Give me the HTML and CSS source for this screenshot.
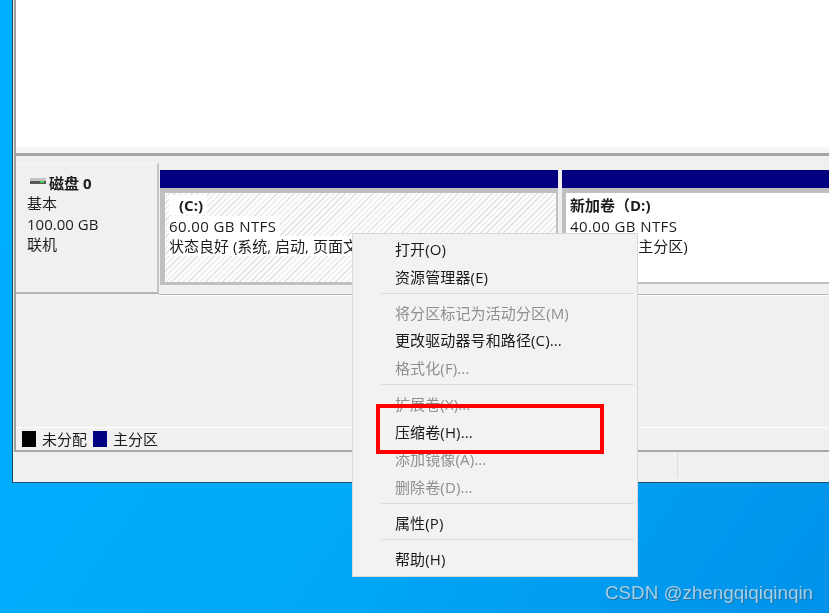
FILE: index.html
```html
<!DOCTYPE html>
<html lang="zh-CN">
<head>
<meta charset="utf-8">
<title>磁盘管理</title>
<link rel="stylesheet" href="styles.css">
</head>
<body>
<div class="desktop">
  <div class="window">
    <div class="frame">
      <div class="volume-list"></div>
      <div class="graph">
        <div class="disk-row">
          <div class="disk-card">
            <div class="disk-title">
              <svg class="disk-icon" width="16" height="7" viewBox="0 0 16 7"><rect x="0" y="0" width="16" height="3" fill="#c4c4c4"/><rect x="0" y="3" width="16" height="3" fill="#555"/><rect x="10" y="3" width="4" height="2" fill="#3fcf4a"/></svg>
              <b>磁盘 0</b>
            </div>
            <div class="line">基本</div>
            <div class="line">100.00 GB</div>
            <div class="line">联机</div>
          </div>
          <div class="partition part-c">
            <div class="part-head"></div>
            <div class="part-body hatch">
              <div class="line"><span class="label bold indent">(C:)</span></div>
              <div class="line"><span class="label wide">60.00 GB NTFS</span></div>
              <div class="line"><span class="label">状态良好 (系统, 启动, 页面文件, 故障转储, 主分区)</span></div>
            </div>
          </div>
          <div class="partition part-d">
            <div class="part-head"></div>
            <div class="part-body">
              <div class="line"><span class="label bold">新加卷（D:)</span></div>
              <div class="line"><span class="label wide">40.00 GB NTFS</span></div>
              <div class="line"><span class="label">状态良好 (主分区)</span></div>
            </div>
          </div>
        </div>
        <div class="rule"></div>
      </div>
      <div class="legend">
        <span class="swatch swatch-black"></span><span class="legend-text">未分配</span>
        <span class="swatch swatch-navy"></span><span class="legend-text">主分区</span>
      </div>
    </div>
    <div class="status">
      <span class="status-cell"></span>
    </div>
  </div>

  <div class="menu">
    <div class="item">打开(O)</div>
    <div class="item">资源管理器(E)</div>
    <div class="sep"></div>
    <div class="item off">将分区标记为活动分区(M)</div>
    <div class="item">更改驱动器号和路径(C)...</div>
    <div class="item off">格式化(F)...</div>
    <div class="sep"></div>
    <div class="item off">扩展卷(X)...</div>
    <div class="item">压缩卷(H)...</div>
    <div class="item off">添加镜像(A)...</div>
    <div class="item off">删除卷(D)...</div>
    <div class="sep"></div>
    <div class="item">属性(P)</div>
    <div class="sep"></div>
    <div class="item">帮助(H)</div>
  </div>
  <div class="highlight"></div>
  <div class="watermark">CSDN @zhengqiqiqinqin</div>
</div>
</body>
</html>
```
FILE: styles.css
```css
* { box-sizing: border-box; }
html, body { margin: 0; padding: 0; }
body {
  font-family: "Open Sans", "Noto Sans CJK SC", sans-serif;
  font-size: 15px;
  color: #1c1c1c;
}
.desktop {
  position: relative;
  width: 829px;
  height: 613px;
  overflow: hidden;
  background: linear-gradient(125deg, #00b0ff 0%, #00a9f8 55%, #0092ea 100%);
  filter: blur(0.3px);
}
.window {
  position: absolute;
  left: 12px;
  top: 0;
  width: 817px;
  height: 483px;
  display: flex;
  flex-direction: column;
  background: #f0f0f0;
  border-left: 1px solid #20485e;
  border-bottom: 1px solid #1c5474;
}
.frame {
  height: 452px;
  margin-left: 1px;
  display: flex;
  flex-direction: column;
  border-left: 2px solid #a0a0a0;
  border-bottom: 2px solid #a8a8a8;
}
.volume-list {
  height: 156px;
  background: linear-gradient(#fff 0 147px, #f6f6f6 147px 153px, #a4a4a4 153px);
}
.graph {
  height: 271px;
  padding-top: 7px;
  display: flex;
  flex-direction: column;
}
.disk-row {
  display: flex;
  height: 131px;
}
.disk-card {
  width: 143px;
  height: 131px;
  padding: 8px 0 0 11px;
  background: #f0f0f0;
  border-right: 2px solid #c4c4c4;
  border-bottom: 2px solid #b4b4b4;
  border-top: 1px solid #f8f8f8;
  flex: none;
}
.disk-title {
  display: flex;
  align-items: center;
  height: 21px;
  margin-left: 3px;
}
.disk-icon { margin-top: -3px; margin-right: 3px; flex: none; }
.line {
  height: 20.5px;
  line-height: 20px;
  white-space: nowrap;
}
.partition {
  display: flex;
  flex-direction: column;
  height: 122px;
  margin-top: 7px;
}
.part-c { width: 398px; margin-left: 1px; flex: none; }
.part-d { flex: 1; margin-left: 4px; margin-right: -2px; }
.part-head {
  height: 18px;
  background: #000080;
  flex: none;
}
.part-body {
  height: 95px;
  margin-top: 0;
  padding: 2px 0 0 4px;
  border: solid #c0c0c0;
  border-width: 5px 2px 3px 5px;
  background: #fff;
  overflow: hidden;
}
.part-c .part-body { height: 97px; border-width: 5px 2px 3px 5px; }
.part-d .part-body { border-width: 5px 0 2px 4px; height: 96px; }
.hatch {
  background: repeating-linear-gradient(135deg, #fcfcfc 0 3px, #e2e2e2 3px 4px);
}
.label {
  display: inline-block;
  height: 20px;
  padding-right: 4px;
  background: #fff;
}
.bold { font-weight: 700; }
.indent { padding-left: 10px; }
.wide { letter-spacing: 0.4px; }
.rule {
  height: 2px;
  margin-top: 0;
  background: #b8b8b8;
  border-bottom: 1px solid #fff;
  margin-left: 143px;
}
.legend {
  height: 23px;
  display: flex;
  align-items: center;
  padding-left: 6px;
  border-top: 1px solid #fff;
  background: #f0f0f0;
}
.swatch {
  width: 14px;
  height: 16px;
  flex: none;
}
.swatch-black { background: #000; }
.swatch-navy { background: #000080; margin-left: 6px; }
.legend-text { margin-left: 6px; line-height: 20px; }
.status {
  flex: 1;
  margin-left: 0;
  background: #f0f0f0;
  padding-left: 664px;
  padding-top: 1px;
}
.status-cell {
  display: block;
  width: 1px;
  height: 25px;
  background: #dcdcdc;
}
.menu {
  position: absolute;
  left: 352px;
  top: 233px;
  width: 286px;
  height: 344px;
  padding: 2px 3px 3px 0;
  background: #f2f2f2;
  border: 1px solid #d8d8d8;
}
.item {
  height: 27.5px;
  line-height: 27.5px;
  padding-left: 42px;
  color: #1a1a1a;
  letter-spacing: 0.12px;
  white-space: nowrap;
}
.item.off { color: #8f8f8f; }
.sep {
  height: 8.75px;
  margin-left: 28px;
  background: linear-gradient(#dcdcdc, #dcdcdc) 0 2px / 100% 1px no-repeat;
}
.highlight {
  position: absolute;
  left: 376px;
  top: 404px;
  width: 228px;
  height: 50px;
  border: 4px solid #f00;
}
.watermark {
  position: absolute;
  left: 605px;
  top: 581px;
  font-family: "Liberation Sans", sans-serif;
  font-size: 18.8px;
  line-height: 24px;
  white-space: nowrap;
  color: #a3cfe8;
  text-shadow: 1px 1px 1px #2a6f9c;
}
```
